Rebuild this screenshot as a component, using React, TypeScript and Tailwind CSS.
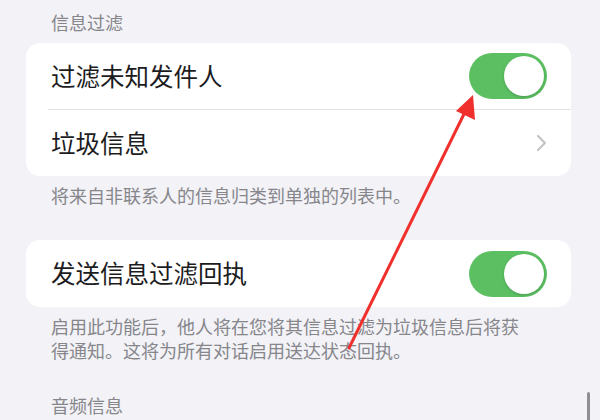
import React from "react";

function Toggle() {
    return (
        <div className="w-[78px] h-[46px] rounded-full bg-[#5cc062] p-[3px] flex justify-end">
            <div className="w-[40px] h-[40px] rounded-full bg-white shadow-[0_1px_3px_rgba(0,0,0,0.2)]" />
        </div>
    );
}

export default function App() {
    return (
        <div
            className="relative w-[600px] h-[420px] overflow-hidden bg-[#f2f2f7] text-[#1c1c1e]"
            style={{ fontFamily: '"Noto Sans CJK SC", "Noto Sans", sans-serif' }}
        >
            <div className="pt-[10px] pl-[51px] text-[18px] leading-[24px] text-[#86868b]">信息过滤</div>
            <div className="ml-[26px] mr-[29px] mt-[9px] rounded-[14px] bg-white">
                <div className="h-[66px] flex items-center justify-between pl-[25px] pr-[24px]">
                    <span className="text-[24.5px]">过滤未知发件人</span>
                    <Toggle />
                </div>
                <div className="ml-[22px] h-px bg-[#e3e3e6]" />
                <div className="h-[66px] flex items-center justify-between pl-[25px] pr-[24px]">
                    <span className="text-[24.5px]">垃圾信息</span>
                    <svg width="11" height="18" viewBox="0 0 11 18" fill="none">
                        <path d="M2 2l7 7-7 7" stroke="#c4c4c7" strokeWidth="2.2" strokeLinecap="round" strokeLinejoin="round" />
                    </svg>
                </div>
            </div>
            <div className="pt-[7px] pl-[51px] text-[18px] leading-[24px] text-[#86868b]">将来自非联系人的信息归类到单独的列表中。</div>

            <div className="ml-[26px] mr-[29px] mt-[33px] rounded-[14px] bg-white h-[67px] flex items-center justify-between pl-[25px] pr-[24px]">
                <span className="text-[24.5px]">发送信息过滤回执</span>
                <Toggle />
            </div>
            <div className="pt-[7px] pl-[51px] text-[18px] leading-[24px] text-[#86868b]">
                启用此功能后，他人将在您将其信息过滤为垃圾信息后将获
                <br />
                得通知。这将为所有对话启用送达状态回执。
            </div>

            <div className="pt-[31px] pl-[51px] text-[18px] leading-[24px] text-[#86868b]">音频信息</div>

            <div className="absolute right-[10px] top-[392px] w-[3px] h-[40px] rounded-full bg-[#8e8e93]" />

            <svg className="absolute left-0 top-0" width="600" height="420" viewBox="0 0 600 420">
                <line x1="349" y1="348" x2="465" y2="112" stroke="#f0302c" strokeWidth="3" strokeLinecap="round" />
                <polygon points="473,95 475,120 456,111" fill="#f0302c" />
            </svg>
        </div>
    );
}
